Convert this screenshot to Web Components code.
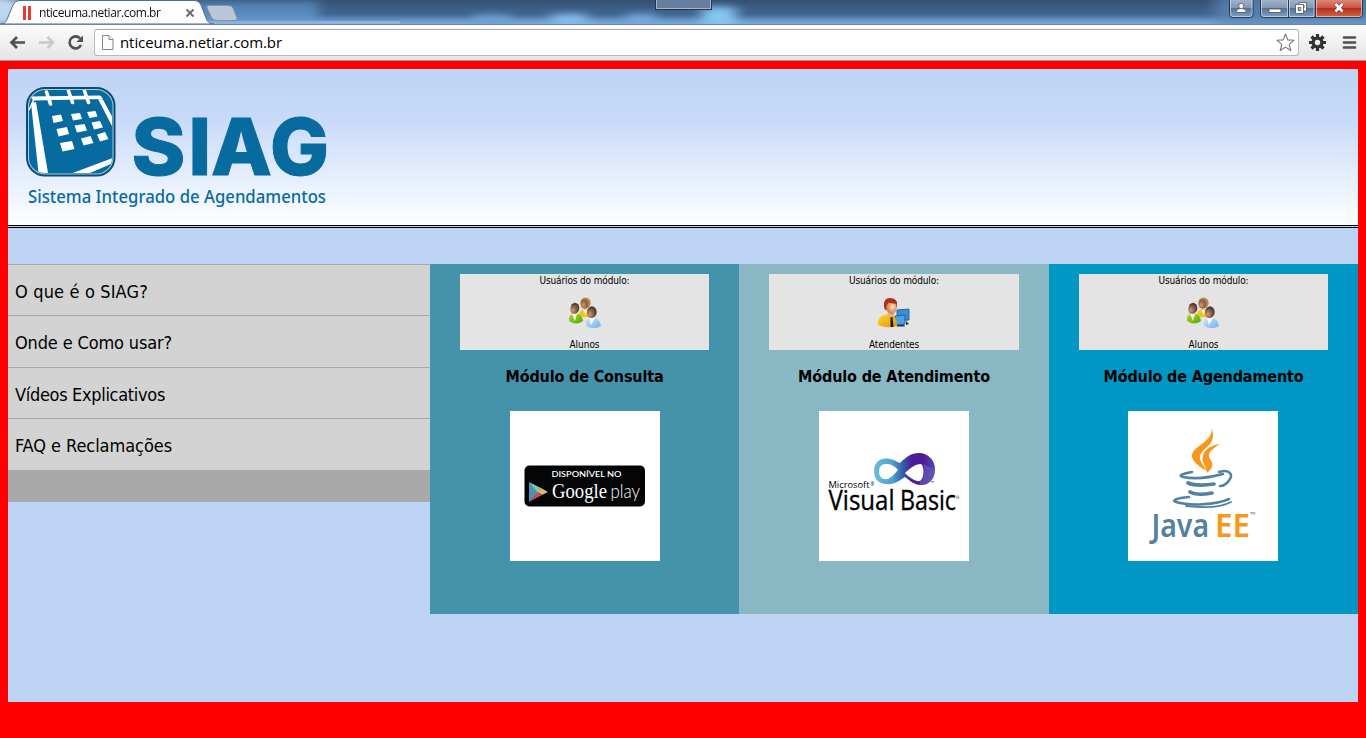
<!DOCTYPE html>
<html lang="pt-BR">
<head>
<meta charset="utf-8">
<title>nticeuma.netiar.com.br</title>
<style>
html,body{margin:0;height:738px;overflow:hidden;background:#f00;font-family:"DejaVu Sans Condensed","DejaVu Sans",sans-serif;color:#000}
body{display:flex;flex-direction:column}
</style>
</head>
<body>
<browser-chrome></browser-chrome>
<siag-page>
  <siag-logo slot="logo"></siag-logo>
  <side-menu slot="menu">
    <menu-row style="--h:51px"><text-run width="133">O que é o SIAG?</text-run></menu-row>
    <menu-row style="--h:52px"><text-run width="157">Onde e Como usar?</text-run></menu-row>
    <menu-row style="--h:51px"><text-run width="150">Vídeos Explicativos</text-run></menu-row>
    <menu-row style="--h:52px"><text-run width="157">FAQ e Reclamações</text-run></menu-row>
  </side-menu>
  <module-card style="--bg:#4593ab;--w:309px;--bw:249px"><users-icon slot="icon"></users-icon><text-run slot="who" width="30">Alunos</text-run><text-run slot="title" width="158">Módulo de Consulta</text-run><play-logo slot="logo"></play-logo></module-card>
  <module-card style="--bg:#89b8c4;--w:310px;--bw:250px"><clerk-icon slot="icon"></clerk-icon><text-run slot="who" width="50">Atendentes</text-run><text-run slot="title" width="192">Módulo de Atendimento</text-run><vb-logo slot="logo"></vb-logo></module-card>
  <module-card style="--bg:#0097c4;--w:309px;--bw:249px;--shift:1px"><users-icon slot="icon"></users-icon><text-run slot="who" width="30">Alunos</text-run><text-run slot="title" width="200">Módulo de Agendamento</text-run><java-logo slot="logo"></java-logo></module-card>
</siag-page>
<script>
const define=(name,html,after)=>customElements.define(name,class extends HTMLElement{
  connectedCallback(){
    if(this.shadowRoot)return;
    this.attachShadow({mode:'open'}).innerHTML=html;
    if(after)after(this);
  }
});

/* A single line of text tracked so that it fills the given width. */
define('text-run','<style>:host{display:inline-block;white-space:nowrap}span{display:inline-block}</style><span><slot></slot></span>',el=>{
  requestAnimationFrame(()=>fit(el));
  fit(el);
});
function fit(el){
  const s=el.shadowRoot.querySelector('span'),w=+el.getAttribute('width');
  s.style.letterSpacing='0';
  const n=el.textContent.length,now=s.getBoundingClientRect().width;
  if(now&&n){const ls=(w-now)/n;s.style.letterSpacing=ls+'px';}
}

define('browser-chrome',`<style>
:host{display:block;height:61px;flex:none}
svg{display:block}
.strip{height:24px;display:flex;background:linear-gradient(#36506f 0,#3a5d85 30%,#42668f 60%,#6c9bcd 88%,#7ba9da);position:relative;overflow:hidden}
.strip svg{position:absolute;left:0;top:0}
.tab{position:relative;display:flex;align-items:center;padding-left:39px;font:12px/26px "Open Sans","Noto Sans",sans-serif;color:#111}
.tab text-run{margin-top:2px}
.bar{height:37px;box-sizing:border-box;background:linear-gradient(#fcfcfc,#e4e4e4);border-top:1px solid #6f84a0;border-bottom:1px solid #9c9c98;display:flex;align-items:center}
.omni{box-sizing:border-box;width:1205px;height:27px;border:1px solid #b9b9b9;border-top-color:#a6a9ae;border-radius:3px;background:#fff;display:flex;align-items:center;font:15px/25px "Open Sans","Noto Sans",sans-serif;padding:0 3px 0 6px}
.omni text-run{margin-left:5px;flex:1}
.nav{width:94px;flex:none}
.right{width:66px;flex:none}
</style>
<div class="strip">
<svg width="1366" height="24">
<defs><filter id="b" filterUnits="userSpaceOnUse" x="-60" y="-30" width="1480" height="90"><feGaussianBlur stdDeviation="7 3.500"/></filter>
<linearGradient id="t" x2="0" y2="1"><stop stop-color="#fff"/><stop offset="1" stop-color="#fbfbfb"/></linearGradient>
<linearGradient id="s" x2="0" y2="1"><stop stop-color="#42678f"/><stop offset=".25" stop-color="#5585b8"/><stop offset=".75" stop-color="#5c8fc6"/><stop offset="1" stop-color="#82aee0"/></linearGradient>
<linearGradient id="w" x2="0" y2="1"><stop stop-color="#a9b9ce"/><stop offset=".5" stop-color="#8197b3"/><stop offset=".5" stop-color="#566f8e"/><stop offset="1" stop-color="#7fa0c6"/></linearGradient>
<linearGradient id="r" x2="0" y2="1"><stop stop-color="#dd9685"/><stop offset=".5" stop-color="#cb5440"/><stop offset=".5" stop-color="#b52a15"/><stop offset="1" stop-color="#d66645"/></linearGradient></defs>
<g filter="url(#b)"><rect x="-50" y="0" width="368" height="25" fill="url(#s)"/><ellipse cx="0" cy="10" rx="24" ry="14" fill="#bed8f0"/>
<rect x="474" y="15" width="36" height="12" fill="#6f9fd2"/><rect x="551" y="14" width="36" height="14" fill="#83baea"/><rect x="626" y="14" width="30" height="13" fill="#75a7db"/><rect x="702" y="7" width="34" height="20" fill="#86c6f2"/><rect x="1215" y="-4" width="200" height="32" fill="#5d88bb" opacity=".7"/></g>
<rect x="200" y="21" width="200" height="3" fill="#a7c3e8" opacity=".5"/>
<rect x="655.500" y="-2" width="56" height="11.500" fill="#677e9f" stroke="#23364c"/><path d="M656.500 0V8.500H710.500V0" fill="none" stroke="#aab5c8"/>
<path d="M0 24C5 24 6 22 8 17L13 5Q15 .5 19 .5H195Q199 .500 201 5L206 18Q208 24 214 24Z" fill="url(#t)" stroke="#526d91"/>
<path d="M207 8Q206 5.500 209 5.500H228Q232 5.500 233 8L237 18Q238 20.500 235 20.500H217Q213 20.500 211.500 17.500Z" fill="#bac7d9" stroke="#8091a9"/>
<path d="M24.500 6v14M29.500 6v14" stroke="#e93a31" stroke-width="3"/>
<path d="M186.500 9.500l7 7m0-7l-7 7" stroke="#666" stroke-width="1.800"/>
<g stroke="#27394f"><path d="M1229.500-2V14.500Q1229.500 17.500 1232.500 17.500H1250Q1253 17.500 1253 14.500V-2Z" fill="url(#w)"/><path d="M1260.500-2V14.500Q1260.500 17.500 1263.500 17.500H1315V-2Z" fill="url(#w)"/><path d="M1315.500-2V17.500H1359.500Q1362.500 17.500 1362.500 14.500V-2Z" fill="url(#r)"/><path d="M1288.500 0V17"/></g>
<path d="M1230.500 0V14Q1231 16.500 1233 16.500H1249.500Q1252 16.500 1252 14V0M1261.500 0V14Q1262 16.500 1264 16.500H1287.500V0M1289.500 0V16.500H1314V0M1316.500 0V16.500H1359Q1361.500 16.500 1361.500 14V0" fill="none" stroke="#dce4ee" opacity=".65"/>
<g fill="#fff" stroke="#4a5360" stroke-width=".8"><path d="M1236.500 12.500V11Q1237 8.500 1241 8.500Q1245.500 8.500 1246 11V12.500Z"/><circle cx="1241.300" cy="6" r="2.600"/><rect x="1269" y="9" width="12" height="3.500"/><path fill-rule="evenodd" d="M1299 2.500h7.500v8.500h-7.500zm2.500 2.500v3h2.500v-3z"/><path fill-rule="evenodd" d="M1295.500 4.500h8v9h-8zm2.800 3v3h2.500v-3z"/></g>
<path d="M1335.500 4l7 7.500m0-7.500l-7 7.500" stroke="#6b3030" stroke-width="4"/><path d="M1335.500 4l7 7.500m0-7.500l-7 7.500" stroke="#fff" stroke-width="2.600"/>
</svg>
<div class="tab"><text-run width="121.5">nticeuma.netiar.com.br</text-run></div>
</div>
<div class="bar">
<svg class="nav" width="94" height="35" viewBox="0 25 94 35" fill="none"><path d="M25 42.500H12M17 37l-5.500 5.500L17 48" stroke="#505050" stroke-width="2.700"/><path d="M39 42.500H52M47.500 37l5.500 5.500L47.500 48" stroke="#c9c9c9" stroke-width="2.500"/><path d="M80 38.300A6 6 0 1 0 81 45" stroke="#505050" stroke-width="2.600"/><path d="M83 35.500V42H76.500Z" fill="#505050"/></svg>
<div class="omni"><svg width="14" height="17" fill="#fcfcfc" stroke="#858585"><path d="M1.500 1.500h6.500l4 4v10h-10.500z"/><path d="M8 1.500v4h4"/></svg><text-run width="162">nticeuma.netiar.com.br</text-run><svg width="19" height="19" fill="#fff" stroke="#777" stroke-width="1.100"><path d="M9.500 1l2.300 5.900 6.200.4-4.800 4 1.600 6.200-5.300-3.400-5.300 3.400 1.600-6.200-4.800-4 6.200-.4z" stroke-linejoin="round"/></svg></div>
<svg class="right" width="66" height="35" viewBox="1299 25 66 35"><g transform="translate(1317.500 42.500)"><circle r="4.400" fill="none" stroke="#333" stroke-width="3.400"/><path d="M0-8.500v3.500M0 5v3.500M-8.500 0h3.500M5 0h3.500M-6-6l2.500 2.500M3.500 3.500L6 6M-6 6l2.500-2.500M3.500-3.500L6-6" stroke="#333" stroke-width="3.200"/></g><path d="M1344 37.500h11M1344 42.500h11M1344 47.500h11" stroke="#505050" stroke-width="2.700" stroke-linecap="round"/></svg>
</div>`);

define('siag-page',`<style>
:host{display:block;box-sizing:border-box;margin:8px 8px 0;height:633px;background:#bed4f4}
header{height:156px;background:linear-gradient(#bed4f4,#c7d9f8 30%,#e2ecfc 65%,#fdfeff);border-bottom:3px double #000;margin-bottom:36px}
main{display:flex;align-items:flex-start}
</style><header><slot name="logo"></slot></header><main><slot name="menu"></slot><slot></slot></main>`);

define('siag-logo',`<style>:host{display:block;width:340px;height:156px}svg{display:block}</style>
<svg width="340" height="156" viewBox="8 69 340 156">
<defs><clipPath id="c"><rect x="29" y="90" width="83" height="83" rx="15"/></clipPath></defs>
<rect x="27" y="88" width="87.500" height="87.500" rx="18" fill="#a6cde4" stroke="#0c4c70" stroke-width="2"/><rect x="29" y="90" width="83.500" height="83.500" rx="16" fill="#086b9f"/>
<g clip-path="url(#c)"><path d="M31 96.500L100 95.500L103 99L33 100.500ZM31 103L36 102L48 173H38.500ZM97 97L101 96L113 118V128ZM70 174L113 158V163L90 173Z" fill="#fff"/><path d="M35 97L29 110" stroke="#fff" stroke-width="1.500"/><path d="M46.500 92l4 12M68.500 91l4 11.500M84.500 91l4 11.500" stroke="#fff" stroke-width="3.600" stroke-linecap="round"/>
<g fill="#fff"><path d="M52 116l9-1.500 2 6.500-9.500 2zM71 114l9-1 2 6-9 1.500zM87 112l8.500-1 2 5.500-8 1.500zM56.500 129l10.500-2 2 7-10.500 2.500zM74.500 125.500l10-1.500 2.500 6.500-10 2zM91.500 122.500l8.500-1.500 3 6.500-9 2zM60 143l12-2 2.500 8-12 2.500zM81 138.500l9.500-2.500 3 7-10 2.500zM97 134.500l8-2.500 3.500 7-8.500 2.500z"/></g></g>
<g fill="#086b9f"><g font-family="Inter,sans-serif" font-weight="800" font-size="79" stroke="#086b9f"><text x="131.500" y="175" textLength="54" lengthAdjust="spacingAndGlyphs">S</text><text x="188.500" y="175">I</text><text x="211" y="175" textLength="61" lengthAdjust="spacingAndGlyphs">A</text><text x="270" y="175" textLength="59" lengthAdjust="spacingAndGlyphs">G</text></g>
<text x="28" y="203" font-family="'Noto Sans','Open Sans',sans-serif" font-weight="500" font-size="18.500" textLength="298" lengthAdjust="spacingAndGlyphs">Sistema Integrado de Agendamentos</text></g>
</svg>`);

define('side-menu',`<style>:host{display:block;box-sizing:border-box;width:422px;height:238px;background:#a9a9a9;padding-bottom:32px}</style><slot></slot>`);
define('menu-row',`<style>:host{display:flex;align-items:flex-start;box-sizing:border-box;height:var(--h);border-top:1px solid #a9a9a9;background:#d3d3d3;padding:16px 7px 0;font-size:18px;line-height:21px}</style><slot></slot>`);

define('module-card',`<style>
:host{display:flex;flex-direction:column;align-items:center;box-sizing:border-box;width:var(--w);height:350px;padding-top:10px;background:var(--bg);flex:none}
.box{width:var(--bw);height:76px;background:#e4e4e4;display:flex;flex-direction:column;align-items:center;font-size:10px;line-height:13px}
.box,.title,.pic{flex:none}
.icon{height:51px;display:flex;align-items:center;margin-right:var(--shift,0)}
.who{height:12px}
.title{height:20px;line-height:20px;margin:17px 0 24px;font-size:16px;font-weight:bold}
.pic{width:150px;height:150px;background:#fff;margin-right:var(--shift,0)}
</style><div class="box"><text-run width="90">Usuários do módulo:</text-run><div class="icon"><slot name="icon"></slot></div><div class="who"><slot name="who"></slot></div></div><div class="title"><slot name="title"></slot></div><div class="pic"><slot name="logo"></slot></div>`);

const icon=(n,s)=>define(n,`<style>:host{display:block;width:34px;height:34px}svg{display:block}</style><svg width="34" height="34">${s}</svg>`);
icon('users-icon',`<defs><radialGradient id="h" cx=".35" cy=".6"><stop stop-color="#d09a7a"/><stop offset="1" stop-color="#8d5a43"/></radialGradient><linearGradient id="g" x2="1" y2="1"><stop stop-color="#a9dc35"/><stop offset="1" stop-color="#5ba500"/></linearGradient><linearGradient id="u" x2="1" y2="1"><stop stop-color="#c8e4ff"/><stop offset="1" stop-color="#73b1ed"/></linearGradient></defs>
<path d="M11 20Q11 13 18 13Q24 14 24 19L22 21H13Z" fill="#f0c514"/><path d="M15 14l3 5 1-5" fill="#fff"/><ellipse cx="17.500" cy="7" rx="5.200" ry="5.500" fill="#b08c43"/><ellipse cx="16.500" cy="8" rx="3.700" ry="4.500" fill="url(#h)"/>
<path d="M1 25Q0 18 6 17.500Q14 17 15 25Q8 30 1 25Z" fill="url(#g)"/><path d="M4 18l3 7 2-7" fill="#f4f5e8"/><ellipse cx="7" cy="12" rx="4.300" ry="5.200" fill="#51433c"/><ellipse cx="6" cy="13.500" rx="3.500" ry="4.200" fill="url(#h)"/>
<path d="M18 30Q17 22 24 21.500Q32 22 33 30Q26 34.500 18 30Z" fill="url(#u)"/><path d="M21 22l2 7 4-7" fill="#fff"/><ellipse cx="24" cy="16" rx="4.700" ry="5.700" fill="#51433c"/><ellipse cx="23" cy="17.500" rx="3.700" ry="4.600" fill="url(#h)"/>`);
icon('clerk-icon',`<defs><linearGradient id="o" x2="1" y2="1"><stop stop-color="#ffd72b"/><stop offset="1" stop-color="#e79300"/></linearGradient><radialGradient id="f" cx=".6" cy=".45"><stop stop-color="#ffdeca"/><stop offset="1" stop-color="#d4814d"/></radialGradient></defs>
<g stroke="#145586" stroke-width=".8"><path d="M20 14l12-1v11l-12 1z" fill="#3b8ed4"/><path d="M18 20l10-1v9l-10 1z" fill="#4b9fe1"/></g><path d="M20 29l7-.5 1 2h-8zM29 25l3 3-3 1z" fill="#17334d"/>
<path d="M1 29Q0 20 9 18.500Q20 17 20 30Q10 33 1 29Z" fill="url(#o)"/><path d="M10 17l4 5 4-4" fill="#e7ad77"/><path d="M13.500 21.500l2-.5 1 10h-3z" fill="#17182c"/><path d="M7 11Q6 2 13 2Q21 2 20 11L17 13L8 14Z" fill="#a5321d"/><ellipse cx="14.500" cy="11.500" rx="5.300" ry="6.500" fill="url(#f)"/><path d="M8 8Q9 2 14 3Q20 3 20 8L11 6.500L9 11Z" fill="#ad321e"/>`);

const picture=(n,s)=>define(n,`<style>:host,svg{display:block;width:150px;height:150px}</style><svg viewBox="0 0 150 150">${s}</svg>`);
picture('play-logo',`<rect x="14.500" y="54.500" width="120.500" height="41" rx="5" fill="#040506"/>
<text x="41.500" y="66" textLength="70" lengthAdjust="spacingAndGlyphs" font-family="Lato,sans-serif" font-weight="600" font-size="8" fill="#fff">DISPONÍVEL NO</text>
<path d="M19 71L29 81L19 91Z" fill="#4e91b3"/><path d="M19 71L32 77.500L28 82Z" fill="#7cc6a1"/><path d="M32 77.500L38 81L32 84L28 81Z" fill="#edb45c"/><path d="M19 91L28 81L32 84Z" fill="#c94c59"/>
<text x="42" y="86.500" textLength="55" lengthAdjust="spacingAndGlyphs" font-family="'Liberation Serif',serif" font-size="20.500" fill="#fff">Google</text><text x="100.500" y="86.500" textLength="29.500" lengthAdjust="spacingAndGlyphs" font-family="Lato,sans-serif" font-weight="300" font-size="19.500" fill="#fff">play</text>`);
picture('vb-logo',`<defs><linearGradient id="l"><stop stop-color="#68bddd"/><stop offset=".3" stop-color="#51a2cc"/><stop offset=".48" stop-color="#365aa9"/><stop offset=".62" stop-color="#4b1f98"/><stop offset=".8" stop-color="#4c1a94"/><stop offset="1" stop-color="#5a46b0"/></linearGradient></defs>
<path fill="url(#l)" fill-rule="evenodd" d="M55 60C55 50 63 46 71 48C77 49 79 52 81 52C87 46 92 42 100 42C109 42 116 49 116 58C116 68 110 74 102 74C95 74 90 69 86 66C81 69 76 74 67 73C60 73 55 68 55 60ZM60 61C60 66 64 69 68 68C73 67 76 62 79 59C75 54 71 53 67 53C62 53 60 56 60 61ZM86 62C91 67 97 71 101 70C105 68 106 56 102 53C96 53 90 58 86 62Z"/><path d="M103 53C107 57 106 66 101 70L101 74C111 74 116 68 116 58Z" fill="#6a62bd" opacity=".6"/>
<g font-family="'Open Sans','Noto Sans',sans-serif"><text x="9.500" y="77" font-size="9.200" font-weight="500" textLength="41" lengthAdjust="spacingAndGlyphs">Microsoft</text><text x="51.500" y="75" font-size="4.500">®</text><g font-size="27" stroke="#000" stroke-width=".35"><text x="9.500" y="99" textLength="66" lengthAdjust="spacingAndGlyphs">Visual</text><text x="81" y="99" textLength="56" lengthAdjust="spacingAndGlyphs">Basic</text></g><text x="137" y="88" font-size="4">®</text><text x="112" y="72.500" font-size="4">™</text></g>`);
picture('java-logo',`<g fill="#f7981d"><path d="M83.500 17C87 27 84 32 78 37C71 43 70 47 75 54L79 60C69 55 63 48 64 44C66 34 85 31 83.500 17Z"/><path d="M92 33C83 39 81 41 81 45C81 49 87 51 83 58L79 62C78 54 73 51 75 45C76 38 84 34 92 33Z"/></g>
<g fill="none" stroke="#5381a0" stroke-linecap="round"><path d="M64 61C53 63 50 65 55 66C65 68 81 67 95 63" stroke-width="2.500"/><path d="M91 61C101 58 105 63 102 68C99 73 95 75 92 75" stroke-width="2.500"/><path d="M60 72C66 74.500 76 74.500 86 73M62 81C67 84 76 83.500 84 82" stroke-width="3.700"/><path d="M61 86C48 87 43 90 48 91C61 95 88 94 101 88" stroke-width="2.500"/><path d="M58 95C76 97 94 96 103 91" stroke-width="1.800"/></g>
<g font-family="'Noto Sans',sans-serif" font-weight="600"><text x="23.500" y="126" font-size="33" fill="#5381a0" textLength="57.500" lengthAdjust="spacingAndGlyphs">Java</text><text x="87" y="126" font-size="33" fill="#f7981d" textLength="35" lengthAdjust="spacingAndGlyphs">EE</text><text x="122" y="106" font-size="7" fill="#5381a0">™</text></g>`);
</script>
</body>
</html>
